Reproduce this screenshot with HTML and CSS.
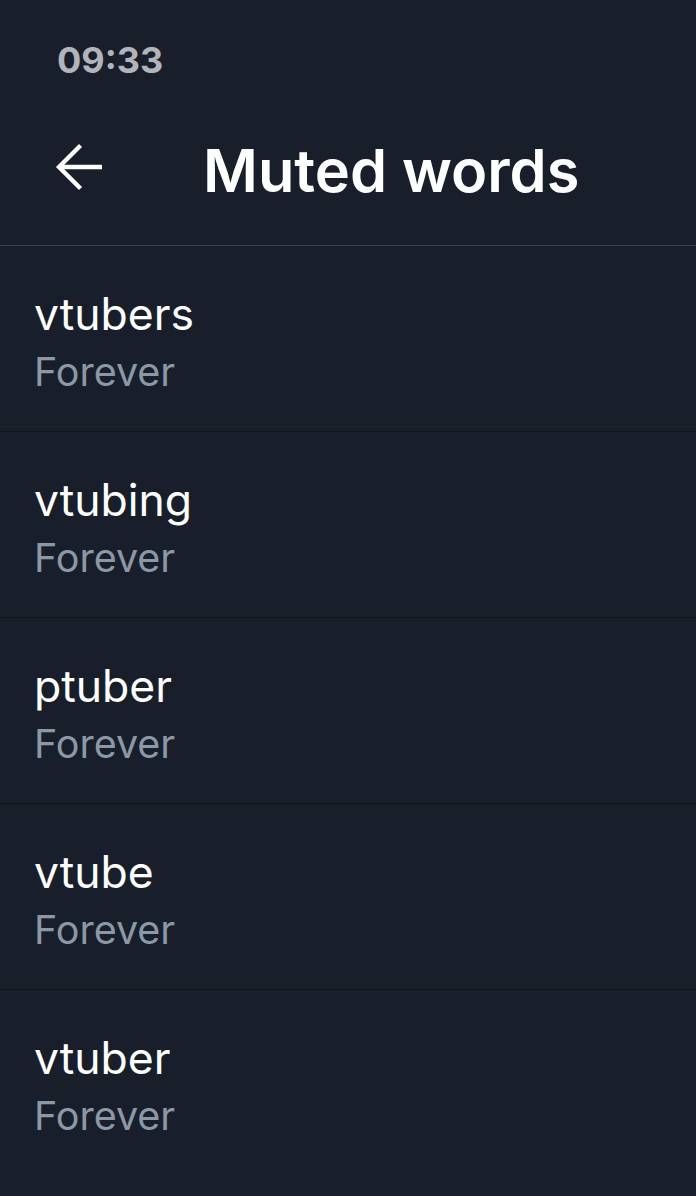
FILE: index.html
```html
<!DOCTYPE html>
<html>
<head>
<meta charset="utf-8">
<link rel="stylesheet" href="styles.css">
</head>
<body>
<div class="screen">
  <div class="status"><span class="time">09:33</span></div>
  <header class="header">
    <span class="back">
      <svg width="50" height="50" viewBox="0 0 50 50" fill="none" stroke="#ffffff" stroke-width="4.3">
        <path d="M6 25 H48"/>
        <path d="M25 5 L5 25 L25 45" stroke-linejoin="miter" stroke-linecap="square"/>
      </svg>
    </span>
    <h1 class="title">Muted words</h1>
  </header>
  <ul class="list">
    <li class="item"><div class="word">vtubers</div><div class="dur">Forever</div></li>
    <li class="item"><div class="word">vtubing</div><div class="dur">Forever</div></li>
    <li class="item"><div class="word">ptuber</div><div class="dur">Forever</div></li>
    <li class="item"><div class="word">vtube</div><div class="dur">Forever</div></li>
    <li class="item"><div class="word">vtuber</div><div class="dur">Forever</div></li>
  </ul>
</div>
</body>
</html>
```
FILE: styles.css
```css
html, body {
  margin: 0;
  padding: 0;
  background: #181f2a;
}
.screen {
  width: 696px;
  height: 1196px;
  overflow: hidden;
  background: #181f2a;
  font-family: Inter, "Noto Sans", sans-serif;
}
.status {
  height: 100px;
  padding-left: 57px;
  box-sizing: border-box;
  display: flex;
  align-items: center;
}
.time {
  color: #b1b5bb;
  font-weight: 700;
  font-size: 36px;
  margin-top: 20px;
}
.header {
  height: 145px;
  display: flex;
  align-items: center;
  border-bottom: 1px solid #3a414c;
}
.back {
  width: 50px;
  height: 50px;
  margin-left: 54px;
  align-self: flex-start;
  margin-top: 42px;
  display: flex;
}
.title {
  margin: -5px 0 0 99px;
  color: #ffffff;
  font-size: 59.5px;
  font-weight: 600;
  letter-spacing: 0;
}
.list {
  list-style: none;
  margin: 0;
  padding: 0;
}
.item {
  border-bottom: 1px solid #10151c;
  padding-left: 34px;
  padding-top: 8px;
  box-sizing: content-box;
  height: 177px;
  display: flex;
  flex-direction: column;
  justify-content: center;
}
.item:last-child {
  border-bottom: none;
}
.word {
  color: #ffffff;
  font-size: 44.5px;
  line-height: 58px;
}
.dur {
  color: #8b98a5;
  font-size: 39.5px;
  line-height: 58px;
}
```
